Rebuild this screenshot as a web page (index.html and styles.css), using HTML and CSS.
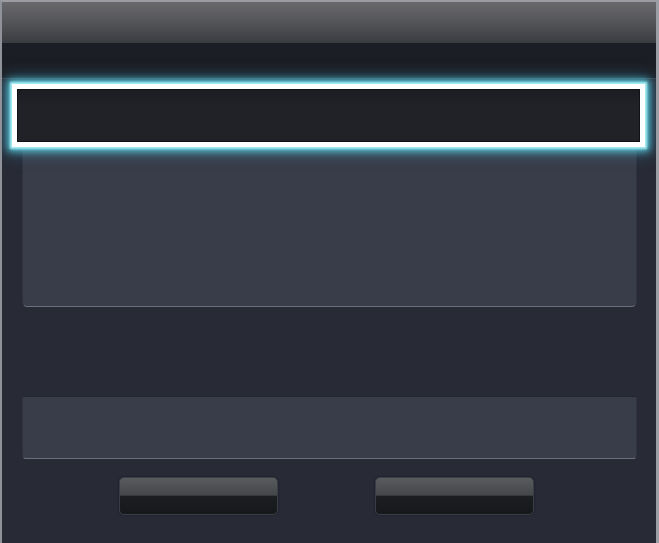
FILE: index.html
```html
<!DOCTYPE html>
<html>
<head>
<meta charset="utf-8">
<link rel="stylesheet" href="styles.css">
</head>
<body>
<div class="frame">
  <div class="header"></div>
  <div class="band"></div>
  <div class="content">
    <div class="focus"><div class="focus-inner"></div></div>
    <div class="panel panel-main"></div>
    <div class="panel panel-small"></div>
    <div class="buttons">
      <div class="btn"></div>
      <div class="btn"></div>
    </div>
  </div>
</div>
</body>
</html>
```
FILE: styles.css
```css
* { box-sizing: border-box; }
html, body { margin: 0; padding: 0; background: #282b36; }
.frame {
  width: 659px;
  height: 543px;
  border-top: 2px solid #9a9ca2;
  border-left: 2px solid #8f9299;
  border-right: 3px solid #9b9ea5;
  background: #282b36;
  overflow: hidden;
  display: flex;
  flex-direction: column;
}
.header {
  height: 41px;
  background: linear-gradient(#69696c, #515256 55%, #3b3c41);
  flex: none;
}
.band {
  height: 36px;
  background: #1c1e25;
  border-bottom: 1px solid #3b3e4a;
  flex: none;
}
.content {
  display: flex;
  flex-direction: column;
  padding-top: 5px;
}
.focus {
  margin: 0 11px 0 10px;
  height: 63px;
  border: 5px solid #ffffff;
  background: #1f2127;
  box-shadow: 0 0 2px 2px #a8eef5, 0 0 7px 4px #56c2d4, 0 0 14px 6px rgba(60, 155, 185, 0.55);
  position: relative;
  z-index: 2;
}
.focus-inner {
  height: 100%;
  border: 1px solid #101114;
  background: linear-gradient(#1b1d22, #202228 30%, #202228);
}
.panel {
  background: #393c49;
  margin: 0 19px 0 20px;
  border-radius: 0 0 5px 5px;
  border: 1px solid #30333f;
  border-bottom: 1px solid #6c707e;
}
.panel-main {
  height: 160px;
  border-top: none;
}
.panel-small {
  margin-top: 89px;
  height: 63px;
  border-top: 1px solid #232530;
  border-radius: 2px 2px 4px 4px;
}
.buttons {
  display: flex;
  gap: 97px;
  padding-left: 117px;
  margin-top: 18px;
}
.btn {
  width: 159px;
  height: 38px;
  border-radius: 5px;
  border: 1px solid #3c3e47;
  background: linear-gradient(#5a5b5f, #45464a 48%, #1d1e22 50%, #17181b);
  box-shadow: 0 0 2px rgba(0,0,0,0.5);
}
```
